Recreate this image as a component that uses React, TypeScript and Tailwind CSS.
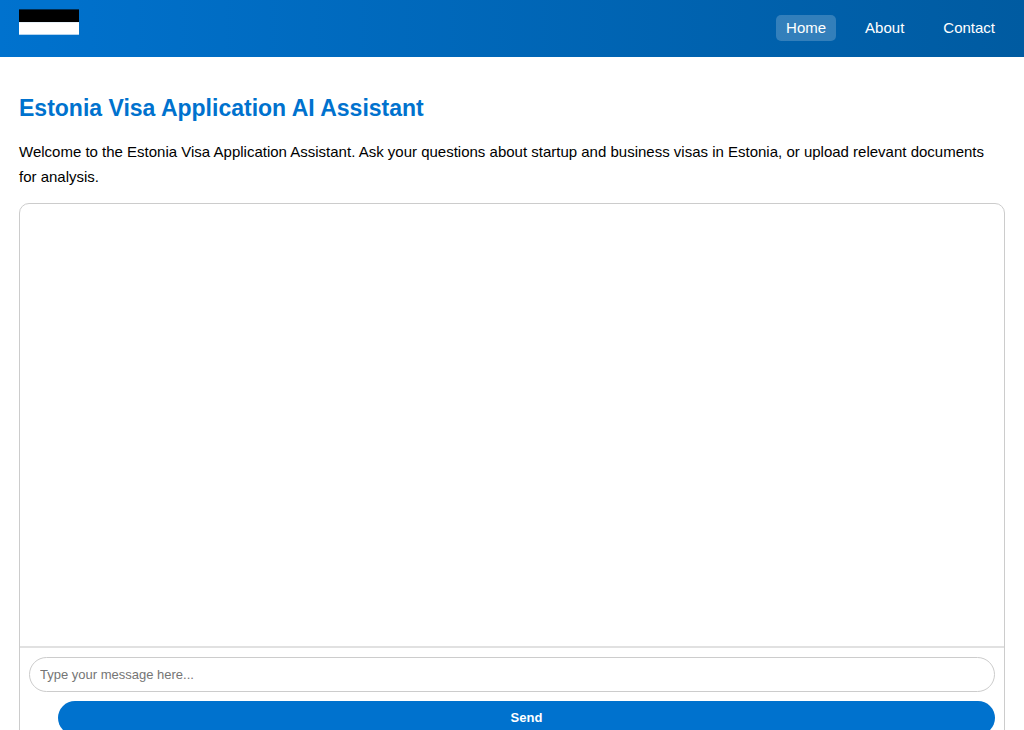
import React from "react";

const links = [
  { label: "Home", active: true },
  { label: "About", active: false },
  { label: "Contact", active: false },
];

function Flag() {
  return (
    <svg viewBox="0 0 60 38" className="block h-[38px] w-[60px]" role="img" aria-label="Flag of Estonia">
      <rect width="60" height="12.4" fill="#0072ce" />
      <rect y="12.4" width="60" height="12.7" fill="#000000" />
      <rect y="25.1" width="60" height="12.6" fill="#ffffff" />
    </svg>
  );
}

export default function App() {
  return (
    <div className="min-h-screen bg-white font-['Liberation_Sans',Arial,sans-serif] text-[15px] text-black">
      <header className="flex items-start justify-between bg-linear-to-r from-[#0072ce] to-[#005ba1] px-[19px] pb-4">
        <div className="-mt-[3px]">
          <Flag />
        </div>
        <nav className="flex gap-[19px] pt-[15px]">
          {links.map((link) => (
            <a
              key={link.label}
              href="#"
              className={
                link.active
                  ? "rounded-[5px] bg-white/20 px-[10px] py-px leading-6 text-white"
                  : "rounded-[5px] px-[10px] py-px leading-6 text-white"
              }
            >
              {link.label}
            </a>
          ))}
        </nav>
      </header>
      <main className="px-[19px] pt-8">
        <h1 className="text-[23px] leading-[38px] font-bold text-[#0072ce]">
          Estonia Visa Application AI Assistant
        </h1>
        <p className="mt-3 leading-[25px]">
          Welcome to the Estonia Visa Application Assistant. Ask your questions about startup and business visas in
          Estonia, or upload relevant documents for analysis.
        </p>
        <section className="mt-[14px] rounded-[10px] border border-[#cccccc]">
          <div className="h-[442px]" aria-live="polite" />
          <form className="border-t-2 border-[#e1e1e1] p-[9px]" onSubmit={(e) => e.preventDefault()}>
            <input
              type="text"
              aria-label="Message"
              placeholder="Type your message here..."
              className="block h-[35px] w-full rounded-full border border-[#cccccc] px-[10px] text-[13px] placeholder:text-[#757575]"
            />
            <div className="pt-[9px] pl-[29px]">
              <button type="submit" className="block h-[34px] w-full rounded-full bg-[#0072ce] text-[13px] font-bold text-white">
                Send
              </button>
            </div>
          </form>
        </section>
      </main>
    </div>
  );
}
